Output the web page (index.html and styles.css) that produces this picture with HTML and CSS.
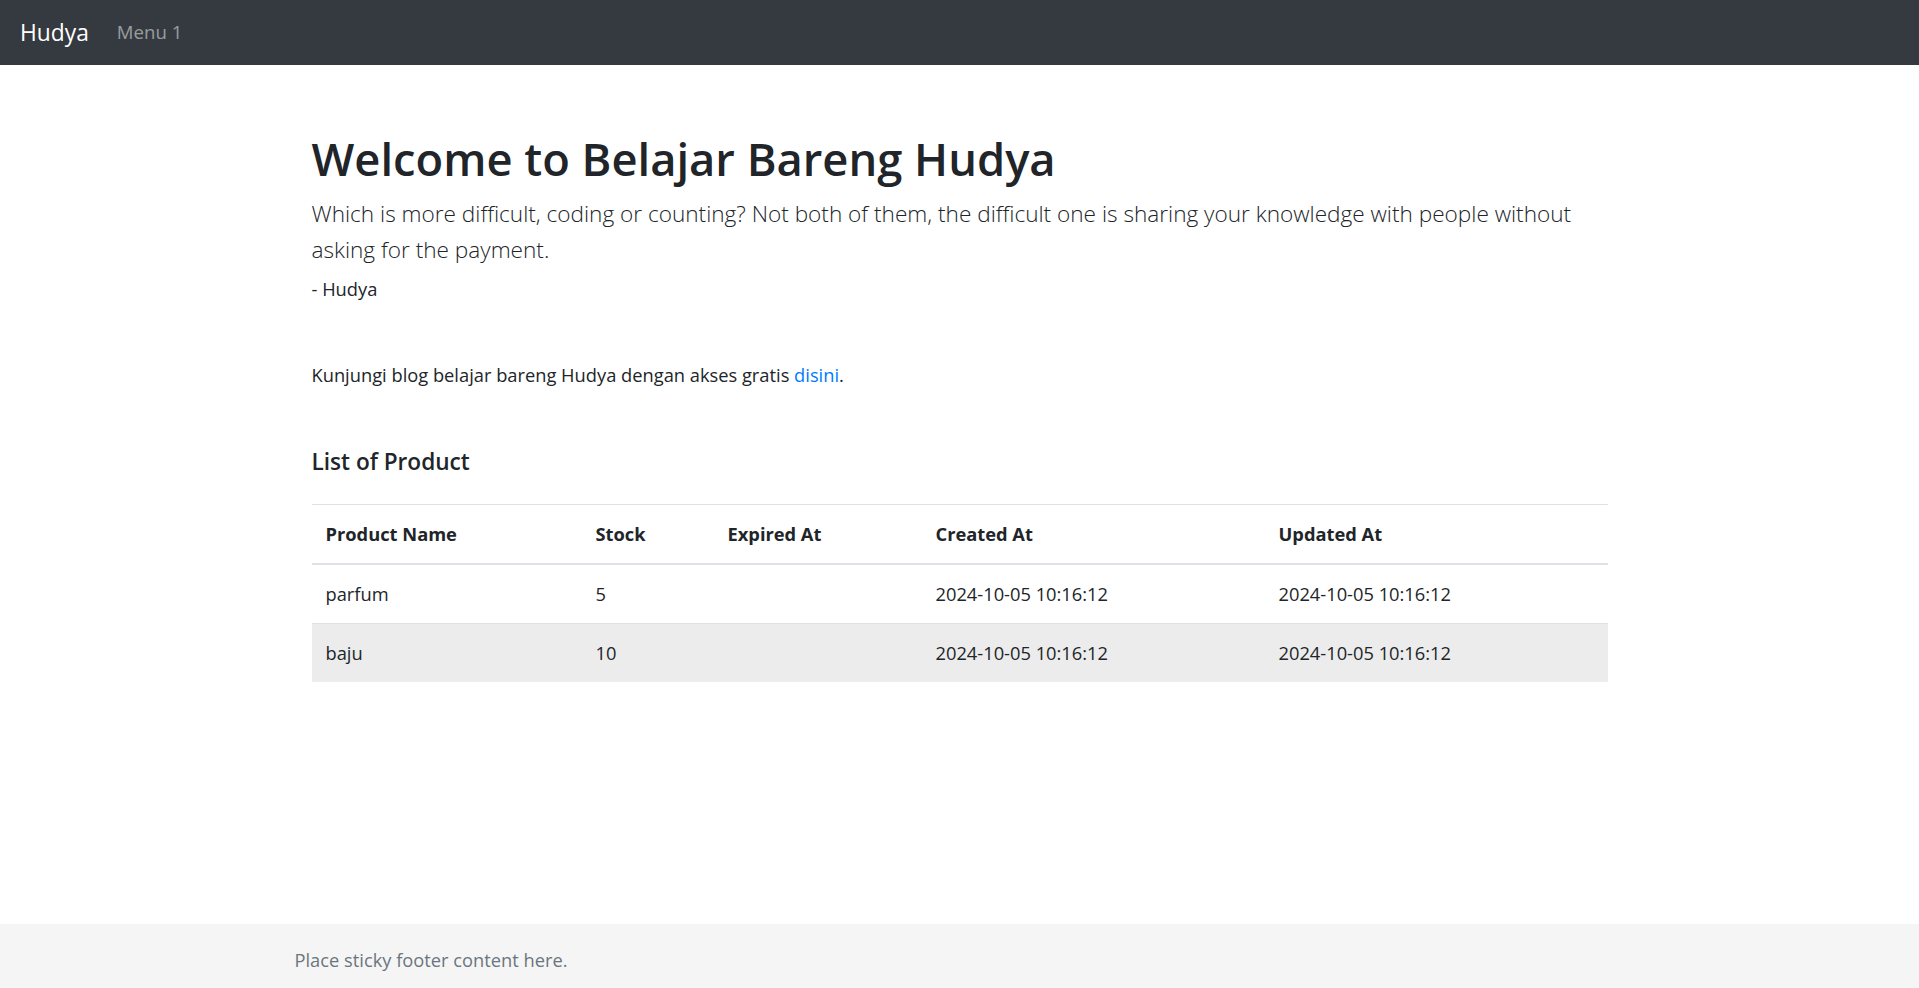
FILE: index.html
```html
<!DOCTYPE html>
<html lang="en">
<head>
<meta charset="utf-8">
<title>Belajar Bareng Hudya</title>
<link rel="stylesheet" href="styles.css">
</head>
<body>
<nav class="navbar">
  <a class="brand" href="#">Hudya</a>
  <a class="nav-link" href="#">Menu 1</a>
</nav>
<main class="main">
  <div class="container">
    <h1 class="title">Welcome to Belajar Bareng Hudya</h1>
    <p class="lead">Which is more difficult, coding or counting? Not both of them, the difficult one is sharing your knowledge with people without asking for the payment.</p>
    <p class="author">- Hudya</p>
    <p class="blog">Kunjungi blog belajar bareng Hudya dengan akses gratis <a class="link" href="#">disini</a>.</p>
    <h5 class="section-title">List of Product</h5>
    <table class="table">
      <thead>
        <tr>
          <th class="c1">Product Name</th>
          <th class="c2">Stock</th>
          <th class="c3">Expired At</th>
          <th class="c4">Created At</th>
          <th class="c5">Updated At</th>
        </tr>
      </thead>
      <tbody>
        <tr>
          <td>parfum</td>
          <td>5</td>
          <td></td>
          <td>2024-10-05 10:16:12</td>
          <td>2024-10-05 10:16:12</td>
        </tr>
        <tr class="row-alt">
          <td>baju</td>
          <td>10</td>
          <td></td>
          <td>2024-10-05 10:16:12</td>
          <td>2024-10-05 10:16:12</td>
        </tr>
      </tbody>
    </table>
  </div>
</main>
<footer class="footer">
  <div class="footer-inner">
    <span class="muted">Place sticky footer content here.</span>
  </div>
</footer>
</body>
</html>
```

FILE: styles.css
```css
* { box-sizing: border-box; }

html, body { height: 100%; }

body {
  margin: 0;
  min-height: 100%;
  display: flex;
  flex-direction: column;
  font-family: "Open Sans", "Noto Sans", sans-serif;
  font-size: 18.3px;
  line-height: 28px;
  color: #212529;
  background: #fff;
}

.navbar {
  height: 65px;
  flex: 0 0 65px;
  background: #343a40;
  display: flex;
  align-items: center;
  padding: 0 20px;
}

.brand {
  color: #fff;
  text-decoration: none;
  font-size: 22.8px;
  line-height: 34px;
  margin-right: 28px;
  margin-top: 1px;
}

.nav-link {
  color: rgba(255, 255, 255, 0.5);
  text-decoration: none;
  font-size: 18.6px;
  line-height: 28px;
  margin-top: -1px;
}

.main {
  flex: 1 0 auto;
  padding-top: 66px;
}

.container {
  width: 1296px;
  margin: 0 auto;
}

.title {
  margin: 0 0 9px;
  font-size: 45.3px;
  line-height: 56px;
  font-weight: 600;
}

.lead {
  margin: 0;
  font-size: 22.6px;
  line-height: 35.5px;
  font-weight: 300;
}

.author {
  margin: 8px 0 0;
}

.blog {
  margin: 58px 0 0;
}

.link {
  color: #007bff;
  text-decoration: none;
}

.section-title {
  margin: 59px 0 28px;
  font-size: 22.6px;
  line-height: 28px;
  font-weight: 600;
}

.table {
  width: 100%;
  border-collapse: collapse;
  table-layout: fixed;
}

.table th,
.table td {
  padding: 14px;
  line-height: 30px;
  text-align: left;
  vertical-align: top;
  border-top: 1px solid #dee2e6;
}

.table th {
  font-weight: 700;
  border-bottom: 2px solid #dee2e6;
}

.c1 { width: 270px; }
.c2 { width: 132px; }
.c3 { width: 208px; }
.c4 { width: 343px; }
.c5 { width: 343px; }

.row-alt td { background: #ececec; }

.footer {
  flex: 0 0 64px;
  height: 64px;
  background: #f5f5f5;
}

.footer-inner {
  width: 1330px;
  margin: 0 auto;
  padding-top: 22px;
}

.muted { color: #6c757d; }
```
